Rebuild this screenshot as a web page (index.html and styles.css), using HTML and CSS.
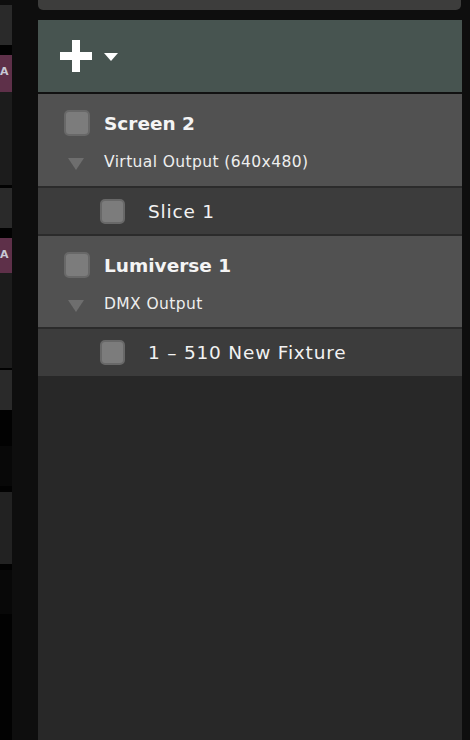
FILE: index.html
```html
<!DOCTYPE html>
<html>
<head>
<meta charset="utf-8">
<link rel="stylesheet" href="styles.css">
</head>
<body>
<div class="app">
  <div class="strip">
    <div class="s s-top"></div>
    <div class="s s-gray" style="height:40px"></div>
    <div class="s s-black" style="height:10px"></div>
    <div class="s s-mag" style="height:37px"><span class="cut">A</span></div>
    <div class="s s-dk" style="height:93px"></div>
    <div class="s s-black" style="height:3px"></div>
    <div class="s s-gray" style="height:40px"></div>
    <div class="s s-black" style="height:10px"></div>
    <div class="s s-mag" style="height:35px"><span class="cut">A</span></div>
    <div class="s s-dk" style="height:95px"></div>
    <div class="s s-black" style="height:2px"></div>
    <div class="s s-gray" style="height:40px"></div>
    <div class="s s-black" style="height:36px"></div>
    <div class="s s-vdk" style="height:40px"></div>
    <div class="s s-black" style="height:6px"></div>
    <div class="s s-dk2" style="height:72px"></div>
    <div class="s s-black" style="height:6px"></div>
    <div class="s s-vdk" style="height:44px"></div>
    <div class="s s-black s-fill"></div>
  </div>
  <div class="gutter"></div>
  <div class="main">
    <div class="topbar"></div>
    <div class="header">
      <svg class="plus" width="32" height="32" viewBox="0 0 32 32"><path d="M12 0h8v12h12v8H20v12h-8V20H0v-8h12z" fill="#fff"/></svg>
      <svg class="caret" width="14" height="8" viewBox="0 0 14 8"><path d="M0 0h14L7 8z" fill="#fff"/></svg>
    </div>
    <div class="list">
      <div class="parent">
        <div class="line">
          <span class="box"></span><span class="title">Screen 2</span>
        </div>
        <div class="line sub">
          <span class="tri"></span><span class="subtext">Virtual Output (640x480)</span>
        </div>
      </div>
      <div class="child">
        <span class="box"></span><span class="ctext">Slice 1</span>
      </div>
      <div class="parent p2">
        <div class="line">
          <span class="box"></span><span class="title">Lumiverse 1</span>
        </div>
        <div class="line sub">
          <span class="tri"></span><span class="subtext">DMX Output</span>
        </div>
      </div>
      <div class="child c2">
        <span class="box"></span><span class="ctext">1 – 510 New Fixture</span>
      </div>
    </div>
  </div>
  <div class="rborder"></div>
</div>
</body>
</html>
```
FILE: styles.css
```css
html, body {
  margin: 0;
  padding: 0;
  background: #020202;
  height: 100%;
}
.app {
  display: flex;
  width: 470px;
  height: 740px;
  overflow: hidden;
  font-family: "DejaVu Sans", "Liberation Sans", sans-serif;
  color: #f2f2f2;
}
.strip {
  width: 12px;
  flex: none;
  display: flex;
  flex-direction: column;
  background: #020202;
}
.s { width: 12px; flex: none; overflow: hidden; }
.s-top { height: 5px; background: #0e0e0e; }
.s-gray { background: #2a2a2a; }
.s-black { background: #020202; }
.s-mag { background: #5e3049; }
.s-dk { background: #1c1c1c; }
.s-dk2 { background: #222222; }
.s-vdk { background: #080808; }
.s-fill { flex: 1; }
.cut {
  display: block;
  font-size: 11px;
  font-weight: bold;
  line-height: 12px;
  margin-top: 11px;
  color: #c8c8d4;
}
.gutter {
  width: 26px;
  flex: none;
  background: #0e0e0e;
}
.rborder {
  width: 8px;
  flex: none;
  background: #0e0e0e;
}
.main {
  width: 424px;
  flex: none;
  display: flex;
  flex-direction: column;
  background: #0e0e0e;
}
.topbar {
  flex: none;
  height: 10px;
  background: #3d3d3c;
  border-radius: 0 0 5px 5px;
  margin-right: 1px;
}
.header {
  flex: none;
  box-sizing: border-box;
  margin-top: 10px;
  height: 74px;
  background: #475450;
  border-bottom: 2px solid #111;
  display: flex;
  align-items: center;
  padding-left: 22px;
  gap: 12px;
}
.plus { display: block; }
.caret { display: block; margin-top: 2px; }
.list {
  flex: 1;
  background: #282828;
}
.parent {
  height: 94px;
  box-sizing: border-box;
  background: #515151;
  border-bottom: 2px solid #2b2b2b;
  padding: 16px 0 0 26px;
}
.parent.p2 { height: 93px; padding-top: 16px; }
.line {
  display: flex;
  align-items: center;
  height: 26px;
}
.line.sub { margin-top: 14px; height: 24px; }
.box {
  width: 26px;
  height: 26px;
  box-sizing: border-box;
  border: 2px solid #686868;
  background: #7c7c7c;
  border-radius: 5px;
  flex: none;
}
.title {
  margin-left: 14px;
  font-size: 18.5px;
  font-weight: bold;
  color: #f4f4f4;
}
.tri {
  width: 0;
  height: 0;
  margin-left: 4px;
  margin-right: 20px;
  border-left: 8px solid transparent;
  border-right: 8px solid transparent;
  border-top: 12px solid #6e6e6e;
  margin-top: 4px;
}
.subtext {
  font-size: 15.5px;
  letter-spacing: 0.4px;
  color: #eeeeee;
}
.child {
  height: 48px;
  box-sizing: border-box;
  background: #3c3c3c;
  border-bottom: 2px solid #2b2b2b;
  display: flex;
  align-items: center;
  padding-left: 62px;
}
.child.c2 { border-bottom: none; height: 47px; }
.child .box { width: 25px; height: 25px; }
.ctext {
  margin-left: 23px;
  font-size: 18.5px;
  letter-spacing: 0.8px;
  color: #f2f2f2;
}
```
